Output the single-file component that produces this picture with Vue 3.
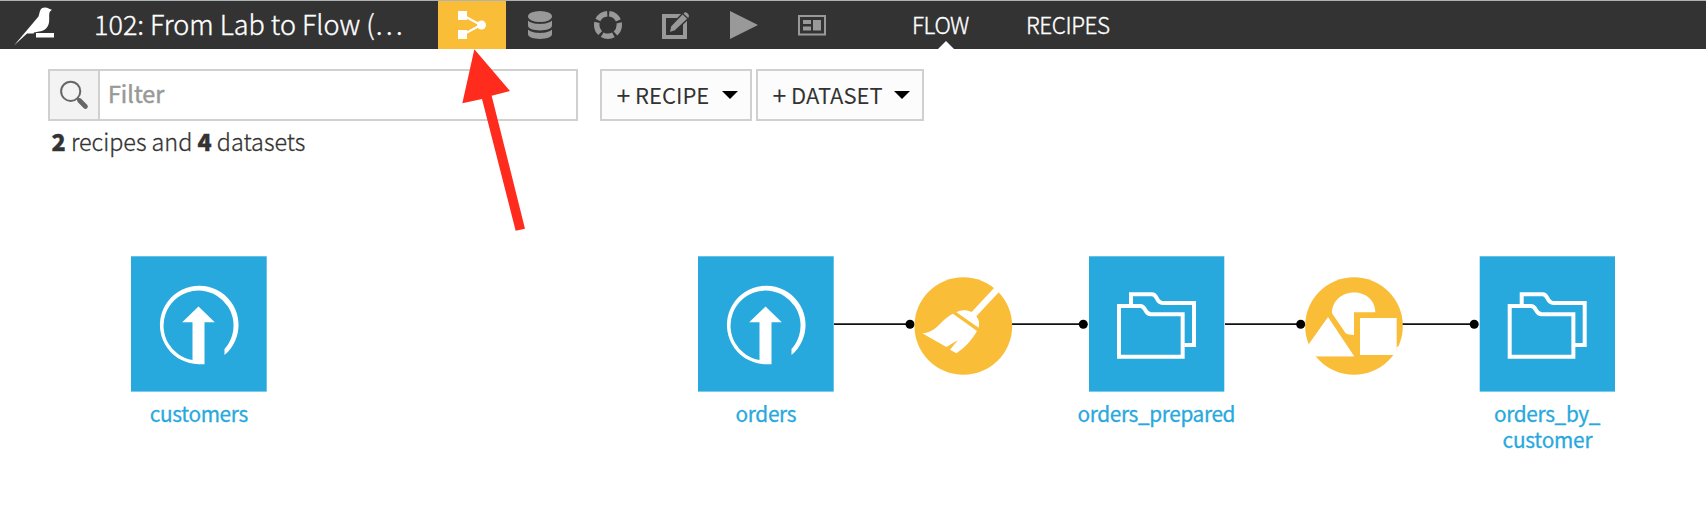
<script setup>
const tools = ['flow', 'data', 'lab', 'edit', 'run', 'board']
const uploads = [{ x: 131 }, { x: 698 }]
const folders = [{ x: 1089 }, { x: 1479.7 }]
const labels = [
  [{ text: 'customers', x: 149.7, y: 421.5, w: 98.5 }],
  [{ text: 'orders', x: 735.5, y: 421.5, w: 61 }],
  [{ text: 'orders_prepared', x: 1077.5, y: 421.5, w: 158 }],
  [
    { text: 'orders_by_', x: 1494, y: 421.5, w: 106.5 },
    { text: 'customer', x: 1502.5, y: 447.5, w: 90 },
  ],
]
const links = [
  { a: 834, b: 910 },
  { a: 1011, b: 1083.3 },
  { a: 1225, b: 1300.7 },
  { a: 1402, b: 1474.2 },
]
</script>

<template>
  <div class="page">
    <header class="topbar">
      <svg class="logo" viewBox="0 0 60 48">
        <path fill="#fff" d="M14 44.5 L38.5 15.500 C40 11 39.500 6.500 45 6.500 C48 6.500 49.500 8.500 52 8.700 L50 10.500 C48.500 13 49.700 17 49 21.500 C48 27 44 30 39 30.500 L34 31.500 L33.500 32.500 L27 32.600 Z" />
        <path fill="#fff" d="M36 32h18v4H36z" /><path fill="#999" d="M36 36h18v1H36z" />
      </svg>
      <div class="title">102: From Lab to Flow (…</div>
      <nav class="tools">
        <div v-for="t in tools" :key="t" class="tool" :class="{ active: t === 'flow' }">
          <svg v-if="t === 'flow'" viewBox="0 0 28 28" fill="#fff">
            <path d="M0 0h9v9H0zM0 19h9v9H0z" /><circle cx="23.500" cy="14" r="4.500" />
            <path d="M8 6 23 14 8 22" fill="none" stroke="#fff" stroke-width="2" />
          </svg>
          <svg v-else-if="t === 'data'" viewBox="0 0 28 28" fill="#999">
            <ellipse cx="14" cy="5.500" rx="12" ry="5.500" />
            <path d="M2 9.500C6 14 22 14 26 9.500V14.500C26 21 2 21 2 14.500Z" />
            <path d="M2 18.500C6 23 22 23 26 18.500V23C26 29.500 2 29.500 2 23Z" />
          </svg>
          <svg v-else-if="t === 'lab'" viewBox="0 0 28 28">
            <circle cx="14" cy="14" r="11.300" fill="none" stroke="#999" stroke-width="5.400" stroke-dasharray="11.700 2.500" stroke-dashoffset="-1.250" transform="rotate(-90 14 14)" />
          </svg>
          <svg v-else-if="t === 'edit'" viewBox="0 0 28 28">
            <path d="M2 5H23V26H2Z" fill="none" stroke="#999" stroke-width="4" />
            <path d="M7 22 8.500 15 21.500 1.500C24-1 29.500 3 27 7L13 20Z" fill="#999" stroke="#333" stroke-width="1.500" />
            <path d="M20.500 2.500 26 7.800" stroke="#333" stroke-width="1.200" />
          </svg>
          <svg v-else-if="t === 'run'" viewBox="0 0 28 28"><path d="M0 0 28 14 0 28Z" fill="#999" /></svg>
          <svg v-else viewBox="0 0 28 28" fill="#999">
            <path d="M1 5H27V23.500H1Z" fill="none" stroke="#999" stroke-width="2" />
            <path d="M5 9h8v4H5zM5 15.500h8v4H5zM15 9h8v10.500h-8z" />
          </svg>
        </div>
      </nav>
      <nav class="tabs">
        <a class="tab flow-tab">FLOW</a>
        <a class="tab">RECIPES</a>
      </nav>
    </header>

    <div class="controls">
      <div class="search">
        <div class="glass">
          <svg viewBox="0 0 48 48" width="48" height="48">
            <circle cx="20.700" cy="20.300" r="9.600" fill="none" stroke="#666" stroke-width="2" />
            <path d="M29.500 29.500 35.500 35.500" stroke="#666" stroke-width="4.600" stroke-linecap="round" />
            <path d="M27 27 30 30" stroke="#666" stroke-width="2" />
          </svg>
        </div>
        <span class="placeholder">Filter</span>
      </div>
      <button class="btn recipe"><span class="plus">+</span><span class="word">RECIPE</span><i class="caret"></i></button>
      <button class="btn dataset"><span class="plus">+</span><span class="word">DATASET</span><i class="caret"></i></button>
    </div>
    <div class="count"><b>2</b> recipes and <b>4</b> datasets</div>

    <svg class="graph" width="1706" height="518" viewBox="0 0 1706 518">
      <g v-for="l in links" :key="l.a">
        <path :d="`M${l.a} 324.200H${l.b}`" stroke="#111" stroke-width="1.700" />
        <circle :cx="l.b" cy="324.200" r="4.500" />
      </g>
      <g v-for="u in uploads" :key="u.x" :transform="`translate(${u.x} 256.300)`">
        <rect width="135.700" height="135.300" fill="#28a9dd" />
        <path transform="translate(-.5 0)" d="M68 50.200 84.300 66H74V108H68A39.300 39.300 0 1 1 94 98.800V92.800A35 35 0 1 0 62 103.800V66H51.700Z" fill="#fff" />
      </g>
      <g v-for="f in folders" :key="f.x" :transform="`translate(${f.x} 256.300)`">
        <rect width="135.300" height="135.300" fill="#28a9dd" />
        <g transform="translate(-19 -11.300) scale(.33333)" fill="none" stroke="#fff" stroke-width="12">
          <path d="M147 183H211C229 183 222 208 243 208H338V335H147Z" />
          <path d="M183 180V148H246C264 148 257 174 278 174H372V300H343" />
        </g>
      </g>
      <g transform="translate(830 245) scale(.33333)">
        <circle cx="400" cy="243" r="146.500" fill="#f9bd38" />
        <path fill="#fff" d="M500 122 512 136 439 214C447 224 449 235 446 248L379 202C391 194 411 194 425 201L492 129Z" />
        <path fill="#fff" d="M369 206 441 258C426 285 404 308 379 325L360 314 384 285 349 306 277 265C321 262 329 226 369 206Z" />
      </g>
      <g transform="translate(1220 245) scale(.33333)">
        <circle cx="402" cy="243" r="146.500" fill="#f9bd38" />
        <path fill="#fff" d="M336 205C336 125 464 120 466 202H402V270Q385 270 377 265ZM324 217 402 334H250V322ZM420 219H530V330H420Z" />
        <path fill="#fff" d="M324 217 402 334H288L267 297ZM530 305V330H519L540 340 560 300Z" />
      </g>
      <text v-for="(lines, i) in labels" :key="i" class="label"><tspan v-for="l in lines" :key="l.text" :x="l.x" :y="l.y" :textLength="l.w">{{ l.text }}</tspan></text>
      <path fill="#ff2b1d" transform="translate(440 40) scale(.33333)" d="M103 28 210 153 155 167 255 566 227 572 126 177 67 190Z" />
    </svg>
  </div>
</template>

<style>
body { margin: 0; background: #fff; }
</style>

<style scoped>
.page { position: relative; width: 1706px; height: 518px; overflow: hidden; box-sizing: border-box; font-family: "Noto Sans CJK SC", "Open Sans", sans-serif; color: #333; }
.topbar { display: flex; height: 49px; box-sizing: border-box; border-top: 1px solid #adb3b3; background: #333; color: #fff; }
.logo { width: 60px; height: 48px; }
.title { width: 344px; padding-left: 34px; font-size: 27px; font-weight: 300; line-height: 45px; white-space: nowrap; -webkit-text-stroke: .35px #fff; }
.tools { display: flex; }
.tool { width: 68px; height: 48px; display: flex; align-items: center; justify-content: center; }
.tool svg { width: 28px; height: 28px; overflow: visible; }
.active { background: #f9bd38; }
.tabs { display: flex; padding-left: 66px; gap: 57px; font-size: 22.500px; font-weight: 300; line-height: 46px; letter-spacing: -.4px; -webkit-text-stroke: .35px #fff; }
.tab { display: flex; flex-direction: column; align-items: center; height: 48px; white-space: nowrap; }
.flow-tab::after { content: ""; margin: -6px 0 0 10px; border: 8px solid transparent; border-top: 0; border-bottom-color: #fff; }
.controls { display: flex; padding: 20px 0 0 48px; height: 52px; }
.search { display: flex; width: 530px; height: 52px; box-sizing: border-box; border: 2px solid #d0d0d0; margin-right: 22px; }
.glass { width: 48px; border-right: 2px solid #d0d0d0; background: #f3f3f3; }
.placeholder { padding-left: 8px; color: #999; font-size: 23.300px; line-height: 45px; -webkit-text-stroke: .5px #999; }
.btn { display: flex; align-items: center; height: 52px; box-sizing: border-box; border: 2px solid #d0d0d0; background: #fcfcfc; padding: 0 0 3px 12px; margin: 0; font: 400 22px "Noto Sans CJK SC", "Open Sans", sans-serif; color: #333; white-space: nowrap; }
.recipe { width: 152px; margin-right: 4px; }
.dataset { width: 168px; }
.plus { width: 21px; font-size: 25px; line-height: 30px; transform: translateX(-1px); }
.caret { border: 8px solid transparent; border-bottom: 0; border-top-color: #000; margin: 3px 12px 0 auto; }
.count { padding-left: 51.500px; margin-top: 3px; font-size: 23.350px; line-height: 34px; font-weight: 300; -webkit-text-stroke: .3px #333; }
.count b { font-weight: 900; }
.graph { position: absolute; left: 0; top: 0; }
.label { font-size: 20.800px; fill: #28a9dd; stroke: #28a9dd; stroke-width: .3px; }
</style>
